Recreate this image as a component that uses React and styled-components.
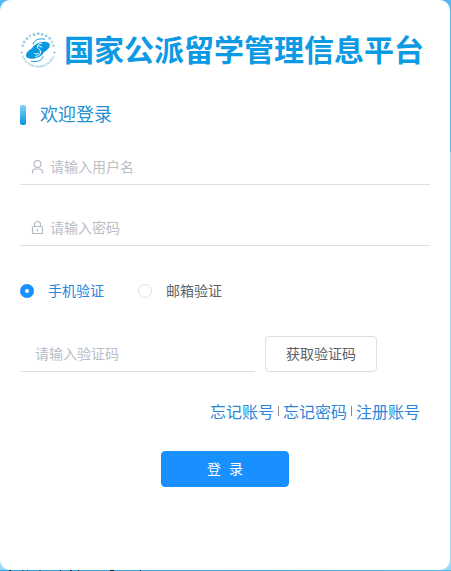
import React, { useState } from "react";
import styled, { createGlobalStyle } from "styled-components";

const GlobalStyle = createGlobalStyle`
  *, *::before, *::after { box-sizing: border-box; }
  body {
    margin: 0;
    font-family: "Liberation Sans", "Noto Sans CJK SC", sans-serif;
    font-size: 14px;
    color: #606266;
  }
  input, button { font: inherit; }
`;

const Page = styled.main`
  min-height: 100vh;
  display: grid;
  padding: 0 1px 1px 0;
  background:
    linear-gradient(90deg, transparent 9px, #08243c 9px 11px, transparent 11px 22px, #177091 22px 24px, transparent 24px 27px, #177091 27px 28px, transparent 28px 39px, #177091 39px 41px, transparent 41px 60px, #08243c 60px 61px, transparent 61px 70px, #08243c 70px 72px, transparent 72px 78px, #08243c 78px 79px, transparent 79px 110px, #08101c 110px 114px, transparent 114px 140px, #08243c 140px 141px, transparent 141px) left bottom / 100% 1px no-repeat,
    linear-gradient(90deg, #2fa6dc, #55bdec) left bottom / 100% 1px no-repeat,
    linear-gradient(#53b9f0 152px, #96daf5 152px);
`;

const Card = styled.form`
  display: flex;
  flex-direction: column;
  padding: 32px 20px 83px;
  border-radius: 10px;
  background: #fff;
`;

const Brand = styled.header`
  display: flex;
  align-items: center;
  gap: 8px;
  height: 38px;
`;

const Emblem = styled.svg`
  flex: none;
  width: 36px;
  height: 36px;
  margin-bottom: 2px;
`;

const Title = styled.h1`
  margin: 0;
  font-size: 30px;
  line-height: 38px;
  font-weight: 700;
  white-space: nowrap;
  color: #0d9ae5;
`;

const Welcome = styled.h2`
  display: flex;
  align-items: center;
  gap: 14px;
  margin: 33px 0 22px;
  font-size: 18px;
  line-height: 24px;
  font-weight: 400;
  color: #258fd0;

  &::before {
    content: "";
    width: 6px;
    height: 20px;
    border-radius: 2px;
    background: linear-gradient(#7fd3fa, #0794de);
  }
`;

const Field = styled.label`
  display: flex;
  align-items: center;
  gap: 5px;
  height: 36px;
  padding-left: ${(p) => (p.$plain ? "15px" : "10px")};
  flex: ${(p) => (p.$plain ? "0 1 235px" : "none")};
  min-width: 0;
  border-bottom: 1px solid #dcdfe6;
  color: #b4bac4;

  svg { flex: none; }
`;

const Fields = styled.div`
  display: grid;
  gap: 25px;
`;

const TextInput = styled.input`
  flex: 1;
  min-width: 0;
  height: 34px;
  padding: 0;
  border: 0;
  outline: 0;
  background: transparent;
  color: #606266;

  &::placeholder { color: #b9bec7; opacity: 1; }
`;

const Methods = styled.div`
  display: flex;
  gap: 34px;
  margin: 35px 0;
`;

const Method = styled.label`
  display: flex;
  align-items: center;
  gap: 14px;
  line-height: 20px;
  color: ${(p) => (p.$active ? "#2585e0" : "#606266")};
`;

const Radio = styled.input`
  appearance: none;
  width: 14px;
  height: 14px;
  margin: 0;
  border: 1px solid #dcdfe6;
  border-radius: 50%;
  background: #fff;

  &:checked { border: 5px solid #1890ff; }
`;

const CodeRow = styled.div`
  display: flex;
  gap: 10px;
`;

const Button = styled.button`
  height: 36px;
  padding: 0 20px 2px;
  border: 1px solid #dcdfe6;
  border-radius: 4px;
  background: #fff;
  color: #606266;
  white-space: nowrap;
`;

const SubmitButton = styled(Button)`
  align-self: center;
  width: 128px;
  margin-top: 26px;
  border-color: #1890ff;
  background: #1890ff;
  color: #fff;
  white-space: pre;
`;

const Links = styled.nav`
  display: flex;
  justify-content: flex-end;
  align-items: center;
  gap: 4px;
  margin-top: 29px;
  padding-right: 10px;
  line-height: 24px;
`;

const TextLink = styled.a`
  font-size: 16px;
  color: #2b85dc;
  text-decoration: none;
`;

const Divider = styled.span`
  width: 1px;
  height: 10px;
  margin-bottom: 4px;
  background: #8a8d92;
`;

function Logo() {
  return (
    <Emblem viewBox="0 0 144 144" role="img" aria-label="国家留学基金管理委员会">
      <defs>
        <path id="upper-ring" d="M14 88 A60 60 0 1 1 130 88" />
        <path id="lower-ring" d="M4 89 A70 70 0 0 0 140 89" />
      </defs>
      <g fill="#3a9fd0">
        <text fontSize="12">
          <textPath href="#upper-ring" startOffset="50%" textAnchor="middle">国 家 留 学 基 金 管 理 委 员 会</textPath>
        </text>
        <text fontSize="11">
          <textPath href="#lower-ring" startOffset="50%" textAnchor="middle">CHINA SCHOLARSHIP COUNCIL</textPath>
        </text>
      </g>
      <circle cx="6" cy="82" r="3" fill="#2699cf" />
      <circle cx="138" cy="82" r="3" fill="#2699cf" />
      <path fill="#0798df" d="M58 53 C74 38 108 34 117 46 C125 59 108 76 88 84 L82 74 C74 78 62 74 54 70 C46 65 50 59 58 53Z" />
      <path fill="#0798df" d="M86 93 C70 108 36 112 26 100 C18 87 36 69 56 62 L62 72 C70 68 82 72 90 76 C98 81 94 87 86 93Z" />
      <g fill="none" strokeLinecap="round">
        <path d="M86 46 C70 46 63 58 74 67 C90 78 84 94 63 98" stroke="#fff" strokeWidth="4" />
        <path d="M98 29 C74 23 54 34 53 48" stroke="#119bdc" strokeWidth="4" />
        <path d="M46 117 C70 123 91 112 92 98" stroke="#119bdc" strokeWidth="4" />
        <path d="M58 86 C65 90 72 88 76 84 M71 58 C77 54 83 56 87 61" stroke="#fff" strokeWidth="4" />
      </g>
    </Emblem>
  );
}

function UserIcon() {
  return (
    <svg width="15" height="16" viewBox="0 0 15 16" fill="none" stroke="currentColor" strokeWidth="1.2" strokeLinecap="round" aria-hidden="true">
      <circle cx="7.5" cy="5" r="3.5" />
      <path d="M2.5 14V13C2.5 10.5 4 10 5.5 10H9.5C11 10 12.5 10.5 12.5 13V14" />
    </svg>
  );
}

function LockIcon() {
  return (
    <svg width="15" height="16" viewBox="0 0 15 16" fill="none" stroke="currentColor" strokeWidth="1.2" strokeLinecap="round" aria-hidden="true">
      <rect x="2.5" y="6.5" width="10" height="7" rx="1" />
      <path d="M4.5 6.5V4.5A3 3 0 0 1 10.5 4.5V6.5M7.5 9V11" />
    </svg>
  );
}

const methods = [
  { id: "phone", label: "手机验证" },
  { id: "email", label: "邮箱验证" },
];

export default function App() {
  const [method, setMethod] = useState("phone");

  return (
    <>
      <GlobalStyle />
      <Page>
        <Card onSubmit={(event) => event.preventDefault()}>
          <Brand>
            <Logo />
            <Title>国家公派留学管理信息平台</Title>
          </Brand>
          <Welcome>欢迎登录</Welcome>
          <Fields>
            <Field>
              <UserIcon />
              <TextInput type="text" placeholder="请输入用户名" aria-label="用户名" />
            </Field>
            <Field>
              <LockIcon />
              <TextInput type="password" placeholder="请输入密码" aria-label="密码" />
            </Field>
          </Fields>
          <Methods role="radiogroup" aria-label="验证方式">
            {methods.map(({ id, label }) => (
              <Method key={id} $active={method === id}>
                <Radio type="radio" name="method" value={id} checked={method === id} onChange={() => setMethod(id)} />
                {label}
              </Method>
            ))}
          </Methods>
          <CodeRow>
            <Field $plain>
              <TextInput type="text" placeholder="请输入验证码" aria-label="验证码" />
            </Field>
            <Button type="button">获取验证码</Button>
          </CodeRow>
          <Links>
            <TextLink href="#account">忘记账号</TextLink>
            <Divider />
            <TextLink href="#password">忘记密码</TextLink>
            <Divider />
            <TextLink href="#register">注册账号</TextLink>
          </Links>
          <SubmitButton type="submit">{"登  录"}</SubmitButton>
        </Card>
      </Page>
    </>
  );
}
